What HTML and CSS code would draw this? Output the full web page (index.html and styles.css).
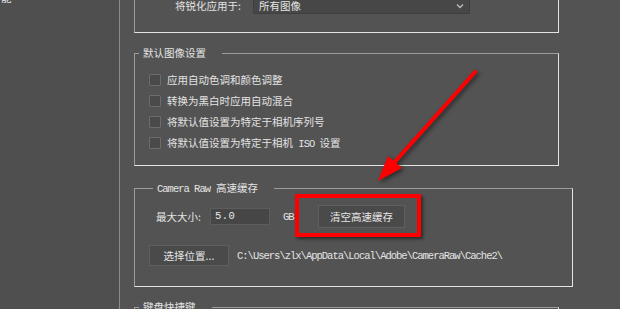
FILE: index.html
```html
<!DOCTYPE html>
<html>
<head>
<title>Camera Raw 首选项</title>
<link rel="stylesheet" href="styles.css">
</head>
<body>

<div class="window">
  <aside class="sidebar">
    <div class="side-item">能</div>
  </aside>

  <main class="content">
    <div class="group group-top">
      <div class="sharpen-row">
        <span class="label">将锐化应用于:</span>
        <div class="select">
          <span>所有图像</span>
          <svg class="chevron" width="8" height="6" viewBox="0 0 8 6"><path d="M1 1.5 L4 4.5 L7 1.5" fill="none" stroke="#bdbdbd" stroke-width="1.3"/></svg>
        </div>
      </div>
    </div>

    <fieldset class="group">
      <legend>默认图像设置</legend>
      <div class="checks">
        <label class="check"><span class="box"></span>应用自动色调和颜色调整</label>
        <label class="check"><span class="box"></span>转换为黑白时应用自动混合</label>
        <label class="check"><span class="box"></span>将默认值设置为特定于相机序列号</label>
        <label class="check"><span class="box"></span><span>将默认值设置为特定于相机 <span class="mono iso">ISO</span> 设置</span></label>
      </div>
    </fieldset>

    <fieldset class="group cache">
      <legend><span class="mono">Camera Raw</span><span class="cache-title">高速缓存</span></legend>
      <div class="size-row">
        <span class="label">最大大小:</span>
        <div class="input mono">5.0</div>
        <span class="unit mono">GB</span>
        <button class="btn btn-clear">清空高速缓存</button>
      </div>
      <div class="location-row">
        <button class="btn btn-location">选择位置...</button>
        <span class="path mono">C:\Users\zlx\AppData\Local\Adobe\CameraRaw\Cache2\</span>
      </div>
    </fieldset>

    <fieldset class="group">
      <legend>键盘快捷键</legend>
      <div class="spacer"></div>
    </fieldset>
  </main>

  <!-- annotation overlay -->
  <div class="highlight"></div>
  <svg class="arrow" width="620" height="309" viewBox="0 0 620 309">
    <line x1="475" y1="72" x2="392" y2="165" stroke="#ff0000" stroke-width="4" stroke-linecap="round"/>
    <polygon points="378,181 388,156 402,168" fill="#ff0000"/>
  </svg>
</div>

</body>
</html>
```

FILE: styles.css
```css
body {
  margin: 0;
  background-color: #535353;
  font-family: "Noto Sans CJK SC", "Liberation Sans", sans-serif;
  font-size: 10.5px;
  color: #e4e4e4;
  overflow: hidden;
}

.window {
  position: relative;
  width: 620px;
  height: 309px;
  display: flex;
  overflow: hidden;
}

.mono {
  font-family: "Liberation Mono", "Noto Sans CJK SC", monospace;
  font-size: 10.5px;
  letter-spacing: -1px;
}

/* left list */
.sidebar {
  width: 119px;
  flex-shrink: 0;
  background-color: #4f4f4f;
  border-right: 1px solid #8a8a8a;
}

.side-item {
  margin-top: -9px;
  padding-left: 1px;
  line-height: 14px;
}

.content {
  padding-left: 14px;
  display: flex;
  flex-direction: column;
}

/* group boxes */
.group {
  flex-shrink: 0;
  width: 423px;
  margin: 0;
  padding: 0;
  border: 1px solid;
  border-color: #9c9c9c #e4e4e4 #e4e4e4 #9c9c9c;
  min-width: 0;
}

.group legend {
  margin-left: 4px;
  padding: 0 16px 0 4px;
  line-height: 16px;
}

.group-top {
  height: 32px;
  border-top: none;
}

.sharpen-row {
  display: flex;
  align-items: center;
  padding-left: 40px;
  margin-top: -4px;
}

.sharpen-row .label {
  width: 78px;
}

.select {
  width: 217px;
  height: 18px;
  background-color: #474747;
  border: 1px solid #3f3f3f;
  display: flex;
  align-items: center;
  justify-content: space-between;
  padding: 0 5px;
  box-sizing: border-box;
}

.chevron {
  margin-top: 2px;
}

fieldset.group:nth-of-type(1) {
  margin-top: 12px;
}

.checks {
  padding: 8px 0 12px 14px;
}

.check {
  display: flex;
  align-items: center;
  height: 21px;
  gap: 6px;
}

.box {
  width: 10px;
  height: 10px;
  border: 1px solid #6c6c6c;
  background-color: #4a4a4a;
  border-radius: 1px;
}

.iso {
  margin: 0 3px;
}

.cache-title {
  margin-left: 6px;
}

/* cache */
.cache {
  margin-top: 14px;
  padding: 8px 0 20px 14px;
}

.size-row {
  display: flex;
  align-items: center;
  height: 23px;
  padding-left: 7px;
}

.size-row .label {
  width: 54px;
}

.input {
  width: 60px;
  height: 17px;
  box-sizing: border-box;
  background-color: #464646;
  border: 1px solid #5c5c5c;
  padding-left: 4px;
  line-height: 15px;
  letter-spacing: 0.5px;
  color: #e8e8e8;
}

.unit {
  margin-left: 13px;
  width: 35px;
}

.btn {
  font-family: "Noto Sans CJK SC", "Liberation Sans", sans-serif;
  font-size: 10.5px;
  color: #e6e6e6;
  background-color: #4a4a4a;
  border: 1px solid #5f5f5f;
  padding: 0;
  cursor: pointer;
}

.btn-clear {
  width: 87px;
  height: 23px;
}

.location-row {
  display: flex;
  align-items: center;
  margin-top: 17px;
  height: 21px;
}

.btn-location {
  width: 80px;
  height: 21px;
}

.path {
  margin-left: 8px;
  color: #e4e4e4;
}

.group:last-child {
  margin-top: 12px;
}

.spacer {
  height: 20px;
}

/* annotations on top of the screenshot */
.highlight {
  position: absolute;
  left: 295px;
  top: 194px;
  width: 118px;
  height: 35px;
  border: 4px solid #ff0000;
  box-shadow: 2px 2px 3px rgba(0, 0, 0, 0.5);
}

.arrow {
  position: absolute;
  left: 0;
  top: 0;
  filter: drop-shadow(2px 2px 2px rgba(0, 0, 0, 0.5));
  pointer-events: none;
}
```
